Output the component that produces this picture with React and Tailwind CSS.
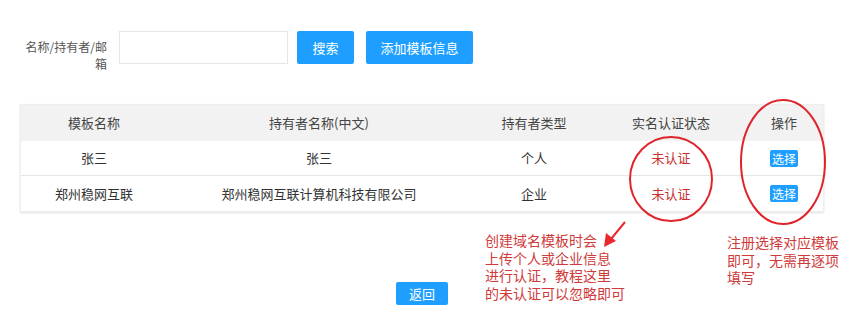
import React from 'react';

const rows = [
  { name: '张三', holder: '张三', type: '个人' },
  { name: '郑州稳网互联', holder: '郑州稳网互联计算机科技有限公司', type: '企业' },
];

export default function App() {
  return (
    <div className="relative w-[850px] h-[311px] bg-white overflow-hidden text-[#333]" style={{ fontFamily: '"Noto Sans CJK SC", "Noto Sans", sans-serif' }}>
      {/* 搜索栏 */}
      <div className="flex items-start h-[33px] mt-[31px] pl-[24px]">
        <div className="w-[83px] pt-[7px] text-right text-[12px] leading-[17px] text-[#555] break-all">名称/持有者/邮箱</div>
        <input className="ml-[12px] w-[169px] h-[33px] border border-[#e6e6e6] outline-none" />
        <button className="ml-[9px] w-[57px] h-[33px] bg-[#1e9fff] text-white text-[13px] rounded-[2px]">搜索</button>
        <button className="ml-[12px] w-[107px] h-[33px] bg-[#1e9fff] text-white text-[13px] rounded-[2px]">添加模板信息</button>
      </div>

      {/* 表格 */}
      <div className="ml-[20px] mt-[40px] w-[804px] shadow-[0_1px_2px_rgba(0,0,0,0.12)] border border-[#eeeeee]">
        <div className="flex h-[36px] items-center bg-[#f2f2f2] text-[13px] text-[#444]">
          <div className="w-[146px] text-center">模板名称</div>
          <div className="w-[304px] text-center">持有者名称(中文)</div>
          <div className="w-[126px] text-center">持有者类型</div>
          <div className="w-[148px] text-center">实名认证状态</div>
          <div className="flex-1 text-center">操作</div>
        </div>
        {rows.map((r, i) => (
          <div key={i} className={`flex h-[35px] items-center text-[13px] ${i === 0 ? 'border-b border-[#e6e6e6]' : ''}`}>
            <div className="w-[146px] text-center">{r.name}</div>
            <div className="w-[304px] text-center">{r.holder}</div>
            <div className="w-[126px] text-center">{r.type}</div>
            <div className="w-[148px] text-center text-[#c9302c]">未认证</div>
            <div className="flex-1 flex justify-center">
              <button className="w-[28px] h-[17px] bg-[#1e9fff] text-white text-[12px] leading-[17px] rounded-[2px]">选择</button>
            </div>
          </div>
        ))}
      </div>

      {/* 返回 */}
      <div className="w-[804px] ml-[20px] mt-[70px] flex justify-center">
        <button className="w-[52px] h-[23px] bg-[#1e9fff] text-white text-[13px] rounded-[2px]">返回</button>
      </div>

      {/* 标注层 */}
      <svg className="absolute left-0 top-0 pointer-events-none" width="850" height="311">
        <ellipse cx="671" cy="179" rx="41" ry="42" fill="none" stroke="#e0242b" strokeWidth="2" />
        <ellipse cx="783" cy="162" rx="42" ry="62" fill="none" stroke="#e0242b" strokeWidth="2" />
        <line x1="625" y1="222" x2="611" y2="239" stroke="#e8282d" strokeWidth="2" />
        <polygon points="604,247 606,233 616,241" fill="#e8282d" />
      </svg>
      <div className="absolute left-[485px] top-[232px] text-[14px] leading-[17.5px] text-[#cf3a3a]">
        创建域名模板时会<br />上传个人或企业信息<br />进行认证，教程这里<br />的未认证可以忽略即可
      </div>
      <div className="absolute left-[727px] top-[234px] text-[14px] leading-[17.5px] text-[#cf3a3a]">
        注册选择对应模板<br />即可，无需再逐项<br />填写
      </div>
    </div>
  );
}
